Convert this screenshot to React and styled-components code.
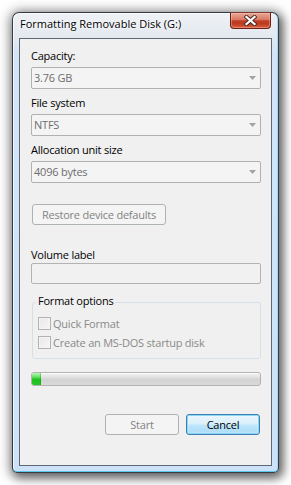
import React from 'react';
import styled, { createGlobalStyle } from 'styled-components';

const Global = createGlobalStyle`
  html, body { margin: 0; padding: 0; background: #ffffff; }
  body {
    font-family: "Open Sans", "Noto Sans", sans-serif;
    font-size: 11px;
    line-height: 15px;
    color: #000;
  }
  #root { width: 291px; height: 485px; overflow: hidden; }
`;

const Desktop = styled.div`
  width: 291px;
  height: 485px;
  box-sizing: border-box;
  padding: 12px 0 0 12px;
  background: #ffffff;
`;

const Window = styled.div`
  width: 267px;
  height: 461px;
  box-sizing: border-box;
  border: 1px solid rgba(34, 40, 48, 0.9);
  border-radius: 7px 7px 5px 5px;
  padding: 0 6px 6px 6px;
  display: flex;
  flex-direction: column;
  background: linear-gradient(180deg, #eef1f5 0px, #e4e9f0 24px, #d3e4f7 40px, #cde2f8 100%);
  box-shadow:
    inset 0 -1px 0 #5cc6f2,
    inset -1px 0 0 #9fdaf5,
    inset 1px 1px 0 rgba(255, 255, 255, 0.7),
    3px 4px 10px 1px rgba(0, 0, 0, 0.45),
    0 1px 12px 3px rgba(0, 0, 0, 0.35);
`;

const TitleBar = styled.div`
  height: 25px;
  flex: none;
  display: flex;
  justify-content: space-between;
  align-items: flex-start;
  padding-left: 1px;
`;

const Title = styled.div`
  margin-top: 3px;
  font-size: 11px;
  line-height: 15px;
  color: #000;
  text-shadow: 0 0 5px rgba(255, 255, 255, 0.95), 0 0 2px rgba(255, 255, 255, 0.95);
  white-space: nowrap;
`;

const CloseButton = styled.div`
  width: 41px;
  height: 17px;
  box-sizing: border-box;
  margin-top: -1px;
  margin-right: 1px;
  border: 1px solid #6a2014;
  border-top-color: #7d3a30;
  border-radius: 0 0 4px 4px;
  display: flex;
  align-items: center;
  justify-content: center;
  background: linear-gradient(180deg, #e9a897 0%, #d97a63 44%, #c03e24 52%, #bd3b21 72%, #d9613f 100%);
  box-shadow: inset 0 0 0 1px rgba(255, 200, 185, 0.4);
`;

const Client = styled.div`
  flex: 1;
  box-sizing: border-box;
  border: 1px solid #5c6873;
  background: #f0f0f0;
  padding: 9px 10px 0 11px;
  display: flex;
  flex-direction: column;
  letter-spacing: -0.22px;
`;

const FieldLabel = styled.div`
  line-height: 15px;
  margin-top: ${p => p.$top || 0}px;
  margin-bottom: ${p => p.$bottom || 0}px;
  color: #000;
  white-space: nowrap;
`;

const Combo = styled.div`
  width: 230px;
  height: 22px;
  box-sizing: border-box;
  border: 1px solid #b1b1b1;
  border-radius: 2px;
  background: #f4f4f4;
  display: flex;
  align-items: center;
  padding: 0 0 2px 2px;
  margin-bottom: ${p => p.$bottom || 0}px;
  color: #6d6d6d;
`;

const Arrow = styled.svg`
  margin-left: auto;
  margin-right: 4px;
  margin-top: 2px;
  flex: none;
`;

const PushButton = styled.div`
  width: ${p => p.$w}px;
  height: 21px;
  box-sizing: border-box;
  border-radius: 3px;
  display: flex;
  align-items: center;
  justify-content: center;
  white-space: nowrap;
  flex: none;
  margin-top: ${p => p.$top || 0}px;
  margin-left: ${p => p.$left || 0}px;
  border: 1px solid ${p => (p.$default ? '#3c7fb1' : '#adb2b5')};
  color: ${p => (p.$default ? '#000' : '#838383')};
  background: ${p =>
    p.$default
      ? 'linear-gradient(180deg, #eaf6fd 0%, #d9f0fc 48%, #bee6fd 52%, #a9dbf6 100%)'
      : '#f4f4f4'};
  box-shadow: ${p =>
    p.$default ? 'inset 0 0 0 1px #8bd6f7, inset 0 0 2px 1px rgba(255,255,255,0.6)' : 'none'};
`;

const TextBox = styled.div`
  width: 230px;
  height: 21px;
  box-sizing: border-box;
  margin-top: 1px;
  border: 1px solid #b3b3b3;
  border-radius: 2px;
  background: #f1f1f1;
`;

const Group = styled.fieldset`
  margin: 9px 0 0 1px;
  width: 229px;
  box-sizing: border-box;
  border: 1px solid #d5dfe5;
  border-radius: 3px;
  padding: 3px 5px 6px 3px;
  min-width: 0;
`;

const Legend = styled.legend`
  padding: 0 2px 3px 2px;
  line-height: 15px;
  color: #000;
  white-space: nowrap;
`;

const CheckRow = styled.div`
  height: 19px;
  display: flex;
  align-items: center;
  gap: 2px;
  margin-left: 2px;
  color: #8a8a8a;
  white-space: nowrap;
`;

const CheckBox = styled.span`
  width: 13px;
  height: 13px;
  box-sizing: border-box;
  flex: none;
  border: 1px solid #b2b2b2;
  background: linear-gradient(135deg, #e9e9e9 0%, #f6f6f6 100%);
  box-shadow: inset 0 0 0 1px #f4f4f4;
`;

const Progress = styled.div`
  margin-top: 13px;
  width: 230px;
  height: 14px;
  box-sizing: border-box;
  border: 1px solid #b2b2b2;
  border-radius: 3px;
  overflow: hidden;
  display: flex;
  background: linear-gradient(180deg, #f3f3f3 0%, #e4e4e4 30%, #d3d3d3 55%, #dadada 100%);
  box-shadow: inset 0 1px 0 rgba(255, 255, 255, 0.8);
`;

const ProgressFill = styled.div`
  height: 100%;
  background: linear-gradient(180deg, #b6f5b6 0%, #6ee26e 30%, #1dc11d 55%, #27c527 100%);
  border-right: 1px solid rgba(0, 120, 0, 0.25);
`;

const ButtonRow = styled.div`
  margin-top: 28px;
  display: flex;
  justify-content: flex-end;
  gap: 7px;
  padding-right: 1px;
`;

function DropArrow() {
  return (
    <Arrow width="7" height="4" viewBox="0 0 7 4">
      <path d="M0 0 H7 L3.5 4 Z" fill="#a3a3a3" />
    </Arrow>
  );
}

function CloseGlyph() {
  return (
    <svg width="13" height="11" viewBox="0 0 13 11">
      <path d="M2.5 2 L10.5 9 M10.5 2 L2.5 9" stroke="#4a2a24" strokeWidth="4.2" strokeLinecap="square" />
      <path d="M2.5 2 L10.5 9 M10.5 2 L2.5 9" stroke="#ffffff" strokeWidth="2.3" strokeLinecap="square" />
    </svg>
  );
}

const fields = [
  { label: 'Capacity:', value: '3.76 GB' },
  { label: 'File system', value: 'NTFS' },
  { label: 'Allocation unit size', value: '4096 bytes' },
];

export default function App() {
  const progress = 8;
  return (
    <>
      <Global />
      <Desktop>
        <Window>
          <TitleBar>
            <Title>Formatting Removable Disk (G:)</Title>
            <CloseButton>
              <CloseGlyph />
            </CloseButton>
          </TitleBar>
          <Client>
            {fields.map((f, i) => (
              <React.Fragment key={f.label}>
                <FieldLabel $bottom={4}>{f.label}</FieldLabel>
                <Combo $bottom={i < fields.length - 1 ? 6 : 0}>
                  <span>{f.value}</span>
                  <DropArrow />
                </Combo>
              </React.Fragment>
            ))}
            <PushButton $w={134} $top={21} $left={1}>Restore device defaults</PushButton>
            <FieldLabel $top={22}>Volume label</FieldLabel>
            <TextBox />
            <Group>
              <Legend>Format options</Legend>
              <CheckRow>
                <CheckBox />
                <span>Quick Format</span>
              </CheckRow>
              <CheckRow>
                <CheckBox />
                <span>Create an MS-DOS startup disk</span>
              </CheckRow>
            </Group>
            <Progress>
              <ProgressFill style={{ width: `${progress}px` }} />
            </Progress>
            <ButtonRow>
              <PushButton $w={74}>Start</PushButton>
              <PushButton $w={74} $default>Cancel</PushButton>
            </ButtonRow>
          </Client>
        </Window>
      </Desktop>
    </>
  );
}
